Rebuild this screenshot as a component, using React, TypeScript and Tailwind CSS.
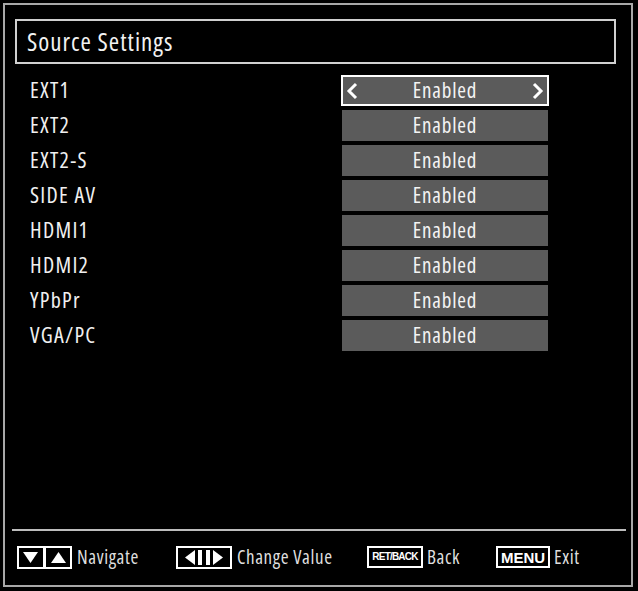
import React from 'react'

const sources = ['EXT1', 'EXT2', 'EXT2-S', 'SIDE AV', 'HDMI1', 'HDMI2', 'YPbPr', 'VGA/PC']

function NavKeys() {
    return (
        <svg width="55" height="23" viewBox="0 0 55 23">
            <rect x="1" y="1" width="53" height="21" fill="black" stroke="white" strokeWidth="2" />
            <rect x="26" y="1" width="3" height="21" fill="white" />
            <polygon points="6,6 21,6 13.5,17" fill="white" />
            <polygon points="34,17 49,17 41.5,6" fill="white" />
        </svg>
    )
}

function ArrowKeys() {
    return (
        <svg width="56" height="23" viewBox="0 0 56 23">
            <rect x="1" y="1" width="54" height="21" fill="black" stroke="white" strokeWidth="2" />
            <rect x="22" y="4" width="4" height="15" fill="white" />
            <rect x="30" y="4" width="4" height="15" fill="white" />
            <polygon points="19,4 19,19 9,11.5" fill="white" />
            <polygon points="37,4 37,19 47,11.5" fill="white" />
        </svg>
    )
}

export default function App() {
    return (
        <div className="w-[638px] h-[591px] bg-black pl-[3px] pt-[3px] font-['Open_Sans',sans-serif] font-stretch-[80%] font-medium">
            <div className="w-[630px] h-[584px] border-2 border-[#a8a8a8] flex flex-col">
                {/* title */}
                <div className="ml-[10px] mt-[14px] w-[601px] h-[45px] border-2 border-[#d0d0d0] flex items-center pl-[10px]">
                    <span className="text-[25px] text-[#f2f2f2] leading-none tracking-[1px]">Source Settings</span>
                </div>

                <div className="mt-[11px] flex flex-col gap-[4px]">
                    {sources.map((name, i) => (
                        <div key={name} className="flex items-center h-[31px]">
                            <span className="ml-[25px] w-[311px] pb-[3px] text-[22px] text-[#f0f0f0] leading-none tracking-[1.3px]">{name}</span>
                            <div
                                className={
                                    i === 0
                                        ? 'w-[208px] h-[31px] bg-[#5b5b5b] border-2 border-white flex items-center justify-between px-[3px]'
                                        : 'w-[206px] h-[31px] ml-[1px] bg-[#5b5b5b] flex items-center justify-center'
                                }
                            >
                                {i === 0 && (
                                    <svg width="12" height="18" viewBox="0 0 12 18">
                                        <polyline points="10,2 3,9 10,16" fill="none" stroke="white" strokeWidth="3" />
                                    </svg>
                                )}
                                <span className="text-[21px] text-[#f4f4f4] leading-none tracking-[0.8px]">Enabled</span>
                                {i === 0 && (
                                    <svg width="12" height="18" viewBox="0 0 12 18">
                                        <polyline points="2,2 9,9 2,16" fill="none" stroke="white" strokeWidth="3" />
                                    </svg>
                                )}
                            </div>
                        </div>
                    ))}
                </div>

                <div className="flex-1" />

                <div className="ml-[7px] w-[614px] h-[2px] bg-[#bdbdbd]" />
                <div className="h-[54px] flex items-center pl-[12px] pb-[2px] text-[19px] text-[#dedede] tracking-[0.6px]">
                    <div className="w-[159px] flex items-center gap-[5px]">
                        <NavKeys />
                        <span className="leading-none">Navigate</span>
                    </div>
                    <div className="w-[191px] flex items-center gap-[5px]">
                        <ArrowKeys />
                        <span className="leading-none">Change Value</span>
                    </div>
                    <div className="w-[129px] flex items-center gap-[4px]">
                        <div className="w-[56px] h-[22px] border-2 border-white flex items-center justify-center">
                            <span className="font-['Liberation_Sans',sans-serif] font-bold text-[10px] text-white leading-none tracking-[-0.8px]">RET/BACK</span>
                        </div>
                        <span className="leading-none">Back</span>
                    </div>
                    <div className="flex items-center gap-[4px]">
                        <div className="w-[54px] h-[22px] border-2 border-white flex items-center justify-center">
                            <span className="font-['Liberation_Sans',sans-serif] font-bold text-[15px] text-white leading-none tracking-normal">MENU</span>
                        </div>
                        <span className="leading-none">Exit</span>
                    </div>
                </div>
            </div>
        </div>
    )
}
